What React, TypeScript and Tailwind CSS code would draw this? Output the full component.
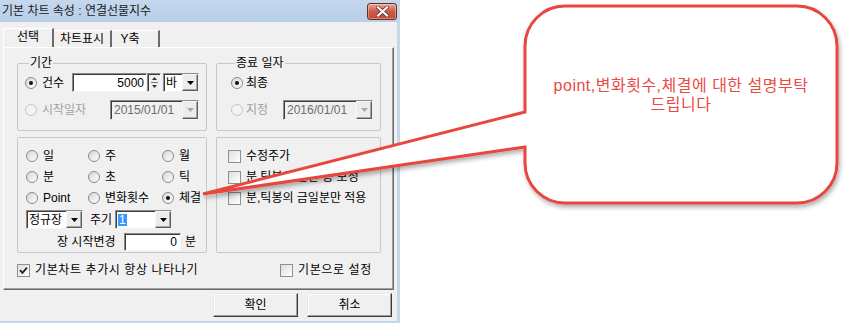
import React from "react";

function Radio({ checked = false, disabled = false }: { checked?: boolean; disabled?: boolean }) {
  return (
    <span
      className={
        disabled
          ? "flex h-[12px] w-[12px] shrink-0 items-center justify-center rounded-full border border-[#c6c6c6] bg-[#f4f4f4]"
          : "flex h-[12px] w-[12px] shrink-0 items-center justify-center rounded-full border border-[#8a8a8a] bg-gradient-to-br from-[#d6d6d6] to-white"
      }
    >
      {checked && <span className="h-[4px] w-[4px] rounded-full bg-[#111]" />}
    </span>
  );
}

function Check({ checked = false }: { checked?: boolean }) {
  return (
    <span className="flex h-[13px] w-[13px] shrink-0 items-center justify-center border border-[#8e8f8f] bg-gradient-to-br from-[#dedede] to-white">
      {checked && (
        <svg width="9" height="9" viewBox="0 0 9 9">
          <path d="M1 4.2 L3.4 6.8 L8 1.6" stroke="#222" strokeWidth="1.8" fill="none" />
        </svg>
      )}
    </span>
  );
}

function DropBtn({ disabled = false }: { disabled?: boolean }) {
  return (
    <span className="flex h-full w-[16px] shrink-0 items-center justify-center border border-t-[#f8f8f8] border-l-[#f8f8f8] border-r-[#5a5a5a] border-b-[#5a5a5a] bg-[#ececec] shadow-[inset_-1px_-1px_0_#a8a8a8]">
      <svg width="7" height="4" viewBox="0 0 7 4">
        <path d="M0 0 H7 L3.5 4 Z" fill={disabled ? "#a8a8a8" : "#000"} />
      </svg>
    </span>
  );
}

const sunken =
  "border border-t-[#8a8a8a] border-l-[#8a8a8a] border-r-[#f4f4f4] border-b-[#f4f4f4] shadow-[inset_1px_1px_0_#3c3c3c]";

function CloseBtn() {
  return (
    <span className="flex h-[17px] w-[30px] items-center justify-center rounded-[3px] border border-[#6b2b22] bg-gradient-to-b from-[#e6a595] via-[#cf5a45] to-[#c24a36] shadow-[inset_0_0_0_1px_rgba(255,255,255,0.35)]">
      <svg width="13" height="11" viewBox="0 0 13 11">
        <path d="M2 1.5 L11 9.5 M11 1.5 L2 9.5" stroke="#5a2a22" strokeWidth="3.6" strokeLinecap="square" />
        <path d="M2 1.5 L11 9.5 M11 1.5 L2 9.5" stroke="#fff" strokeWidth="2.2" strokeLinecap="square" />
      </svg>
    </span>
  );
}

function Btn({ label }: { label: string }) {
  return (
    <div className="flex h-[24px] w-[85px] items-center justify-center border border-t-[#e9e9e9] border-l-[#e9e9e9] border-r-[#3c3c3c] border-b-[#3c3c3c] bg-[#f0f0f0] shadow-[inset_-1px_-1px_0_#a0a0a0,inset_1px_1px_0_#ffffff]">
      {label}
    </div>
  );
}

export default function App() {
  return (
    <div className="relative h-[324px] w-[855px] overflow-hidden bg-white font-['Liberation_Sans','Noto_Sans_CJK_KR',sans-serif] text-[12px] leading-none text-black">
      <div className="flex h-[323px] w-[400px] flex-col border-b-[2px] border-r-[3px] border-[#c4d7eb] bg-[#f0f0f0]">
        {/* title bar */}
        <div className="flex h-[22px] shrink-0 items-center justify-between bg-gradient-to-b from-[#c4d8ee] to-[#b8cfe8] pl-[2px]">
          <span className="text-[12px] text-[#1a1a1a]">기본 차트 속성 : 연결선물지수</span>
          <CloseBtn />
        </div>

        {/* tabs */}
        <div className="mt-[8px] flex h-[17px] shrink-0 items-end pl-[3px]">
          <div className="flex h-[19px] w-[51px] items-center justify-center border-l border-t border-l-white border-t-white border-r-[2px] border-r-[#6b6b6b] pb-[3px]">
            선택
          </div>
          <div className="flex h-[17px] w-[58px] items-center justify-center border-t border-t-white border-r-[2px] border-r-[#6b6b6b]">
            차트표시
          </div>
          <div className="flex h-[17px] w-[48px] items-center justify-center border-t border-t-white border-r-[2px] border-r-[#6b6b6b] pr-[10px]">
            Y축
          </div>
        </div>

        {/* panel */}
        <div className="ml-[3px] flex h-[243px] w-[391px] shrink-0 flex-col border border-t-white border-l-white border-r-[#6b6b6b] border-b-[#6b6b6b] pl-[13px] pt-[9px] shadow-[inset_-1px_-1px_0_#a0a0a0]">
          {/* top groups */}
          <div className="flex">
            <fieldset className="h-[74px] w-[190px] rounded-[2px] border border-[#c8c8c8] pl-[7px] pt-[3px]">
              <legend className="ml-[4px] px-[1px] leading-[13px]">기간</legend>
              <div className="flex h-[19px] items-center">
                <Radio checked />
                <span className="ml-[5px] w-[24px]">건수</span>
                <div className={`ml-[6px] flex h-[19px] w-[75px] items-center justify-end bg-white pr-[2px] ${sunken}`}>5000</div>
                <div className={`flex h-[19px] w-[14px] flex-col items-center justify-center gap-[2px] bg-[#f0f0f0] ${sunken}`}>
                  <svg width="5" height="3" viewBox="0 0 5 3"><path d="M0 3 H5 L2.5 0 Z" fill="#333" /></svg>
                  <span className="h-px w-[7px] bg-[#777]" />
                  <svg width="5" height="3" viewBox="0 0 5 3"><path d="M0 0 H5 L2.5 3 Z" fill="#333" /></svg>
                </div>
                <div className={`ml-[2px] flex h-[19px] w-[36px] items-center justify-between bg-white pl-[2px] ${sunken}`}>
                  <span>바</span>
                  <DropBtn />
                </div>
              </div>
              <div className="mt-[8px] flex h-[20px] items-center">
                <Radio disabled />
                <span className="ml-[5px] w-[48px] text-[#a0a0a0]">시작일자</span>
                <div className={`ml-[20px] flex h-[20px] w-[89px] items-center justify-between bg-[#f0f0f0] pl-[3px] text-[#6d6d6d] ${sunken}`}>
                  <span>2015/01/01</span>
                  <DropBtn disabled />
                </div>
              </div>
            </fieldset>

            <fieldset className="ml-[9px] h-[74px] w-[165px] rounded-[2px] border border-[#c8c8c8] pl-[14px] pt-[3px]">
              <legend className="ml-[4px] px-[1px] leading-[13px]">종료 일자</legend>
              <div className="flex h-[19px] items-center">
                <Radio checked />
                <span className="ml-[3px]">최종</span>
              </div>
              <div className="mt-[8px] flex h-[20px] items-center">
                <Radio disabled />
                <span className="ml-[3px] w-[24px] text-[#a0a0a0]">지정</span>
                <div className={`ml-[13px] flex h-[20px] w-[90px] items-center justify-between bg-[#f0f0f0] pl-[3px] text-[#6d6d6d] ${sunken}`}>
                  <span>2016/01/01</span>
                  <DropBtn disabled />
                </div>
              </div>
            </fieldset>
          </div>

          {/* bottom groups */}
          <div className="mt-[6px] flex">
            <div className="flex h-[116px] w-[190px] flex-col rounded-[2px] border border-[#c8c8c8] pl-[8px] pt-[10px]">
              {[
                ["일", "주", "월"],
                ["분", "초", "틱"],
                ["Point", "변화횟수", "체결"],
              ].map((row, ri) => (
                <div key={ri} className={`flex h-[16px] items-center ${ri > 0 ? "mt-[5px]" : ""}`}>
                  {row.map((t, ci) => (
                    <div key={t} className={`flex items-center ${ci === 0 ? "w-[62px]" : ci === 1 ? "w-[74px]" : ""}`}>
                      <Radio checked={t === "체결"} />
                      <span className="ml-[5px]">{t}</span>
                    </div>
                  ))}
                </div>
              ))}
              <div className="mt-[4px] flex h-[19px] items-center">
                <div className={`flex h-[19px] w-[57px] items-center justify-between bg-white pl-[2px] ${sunken}`}>
                  <span>정규장</span>
                  <DropBtn />
                </div>
                <span className="ml-[7px] w-[24px]">주기</span>
                <div className={`ml-[1px] flex h-[19px] w-[57px] items-center justify-between bg-white pl-[2px] ${sunken}`}>
                  <span className="bg-[#3399ff] px-[1px] text-white">1</span>
                  <DropBtn />
                </div>
              </div>
              <div className="mt-[4px] flex h-[18px] items-center">
                <span className="ml-[31px] w-[63px]">장 시작변경</span>
                <div className={`ml-[4px] flex h-[18px] w-[57px] items-center justify-end bg-white pr-[3px] ${sunken}`}>0</div>
                <span className="ml-[4px]">분</span>
              </div>
            </div>

            <div className="ml-[9px] flex h-[116px] w-[165px] flex-col rounded-[2px] border border-[#c8c8c8] pl-[11px] pt-[10px]">
              {["수정주가", "분,틱봉의 빈칸 봉 보정", "분,틱봉의 금일분만 적용"].map((t, i) => (
                <div key={t} className={`flex h-[16px] items-center ${i > 0 ? "mt-[5px]" : ""}`}>
                  <Check />
                  <span className="ml-[5px] whitespace-nowrap">{t}</span>
                </div>
              ))}
            </div>
          </div>

          <div className="mt-[9px] flex h-[16px] items-center">
            <div className="flex w-[263px] items-center">
              <Check checked />
              <span className="ml-[5px] tracking-[0.6px]">기본차트 추가시 항상 나타나기</span>
            </div>
            <div className="flex items-center">
              <Check />
              <span className="ml-[5px] tracking-[0.6px]">기본으로 설정</span>
            </div>
          </div>
        </div>

        {/* buttons */}
        <div className="mt-[3px] flex justify-end gap-[9px] pr-[5px]">
          <Btn label="확인" />
          <Btn label="취소" />
        </div>
      </div>

      {/* callout annotation */}
      <svg className="pointer-events-none absolute left-0 top-0" width="855" height="324" viewBox="0 0 855 324">
        <defs>
          <filter id="sh" x="-10%" y="-10%" width="130%" height="140%">
            <feDropShadow dx="1.5" dy="3" stdDeviation="2" floodColor="#000" floodOpacity="0.3" />
          </filter>
        </defs>
        <path
          d="M525 112 L203 194 L525 147 L525 163 A40 40 0 0 0 565 203 L797 203 A40 40 0 0 0 837 163 L837 46 A40 40 0 0 0 797 6 L565 6 A40 40 0 0 0 525 46 Z"
          fill="#fff"
          stroke="#e8463d"
          strokeWidth="3"
          strokeLinejoin="miter"
          filter="url(#sh)"
        />
      </svg>
      <div className="pointer-events-none absolute left-[525px] top-[76px] w-[312px] text-center text-[16px] leading-[19px] tracking-[0.5px] text-[#ea4a3f]">
        point,변화횟수,체결에 대한 설명부탁
        <br />
        드립니다
      </div>
    </div>
  );
}
